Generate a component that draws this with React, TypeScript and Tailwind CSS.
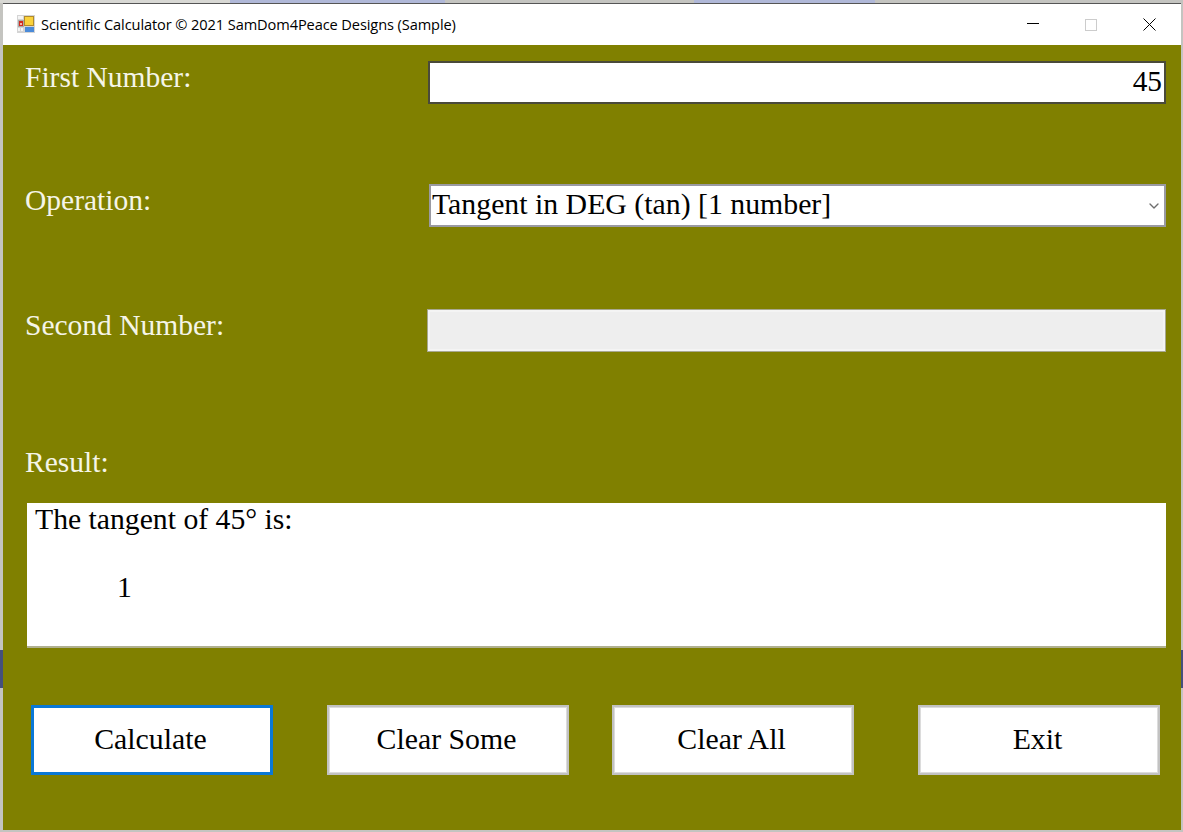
import { ChevronDown } from "lucide-react";

const serif = "font-['Liberation_Serif',serif]";

const AppIcon = () => (
  <svg width="18" height="18" viewBox="0 0 18 18" className="shrink-0">
    <rect width="18" height="18" fill="#d4d4d4" />
    <rect x="1" y="1" width="5" height="3" fill="#f4f4f4" />
    <rect x="1" y="5" width="6" height="7" fill="#a9a9a9" />
    <rect x="2" y="6" width="4" height="5" fill="#d22b20" />
    <rect x="3" y="8" width="2" height="2" fill="#f3b8a8" />
    <rect x="7" y="1" width="10" height="10" fill="#b08a2c" />
    <rect x="8" y="2" width="8" height="8" fill="#fad23c" />
    <rect x="8" y="12" width="9" height="5" fill="#4a8ad8" />
    <rect x="1" y="13" width="2" height="3" fill="#f4f4f4" />
    <rect x="4" y="13" width="2" height="3" fill="#f4f4f4" />
  </svg>
);

const TitleBar = () => (
  <div className="h-[42px] bg-white border-t border-[#555555] flex items-center justify-between">
    <div className="flex items-center gap-[6px] pl-[14px] font-['Open_Sans','Noto_Sans',sans-serif] text-[14.6px] text-black tracking-[-0.1px]">
      <AppIcon />
      <span>Scientific Calculator © 2021 SamDom4Peace Designs (Sample)</span>
    </div>
    <div className="flex items-center pr-[3px]">
      <div className="w-[58px] flex justify-center">
        <div className="w-3 h-px bg-black -mt-[2px]" />
      </div>
      <div className="w-[58px] flex justify-center">
        <div className="w-3 h-3 border border-[#cccccc]" />
      </div>
      <div className="w-[58px] flex justify-center">
        <svg width="13" height="13" viewBox="0 0 13 13" stroke="black" strokeWidth="1" fill="none">
          <path d="M0.5 0.5 12.5 12.5M12.5 0.5 0.5 12.5" />
        </svg>
      </div>
    </div>
  </div>
);

const Label = ({ children, className }: { children: string; className: string }) => (
  <label className={`block text-[29.5px] leading-[34px] text-[#f5f5e8] ${className}`}>{children}</label>
);

const Btn = ({ label, focused, className }: { label: string; focused?: boolean; className?: string }) => (
  <button
    className={`w-[242px] h-[70px] bg-white text-black text-[29.8px] leading-none pr-[3px] pb-[2px] ${
      focused ? "border-[3px] border-[#0a78d6]" : "border-2 border-[#c2c2c2] shadow-[inset_0_0_0_1px_#dcdcdc]"
    } ${className ?? ""}`}
  >
    {label}
  </button>
);

export default function App() {
  return (
    <div className={`relative w-[1183px] h-[832px] bg-[#c4c4c0] overflow-hidden ${serif}`}>
      {/* bits of the desktop showing behind the window */}
      <div className="flex h-[3px]">
        <div className="w-[230px] bg-[#d8d8d4]" />
        <div className="w-[215px] bg-[#b0b8d8]" />
        <div className="w-[249px] bg-[#c4c4c0]" />
        <div className="w-[181px] bg-[#b0b8d8]" />
        <div className="flex-1 bg-[#c4c4c0]" />
      </div>
      <div className="absolute left-0 top-[650px] w-[3px] h-[38px] bg-[#45507c]" />
      <div className="absolute right-0 top-[650px] w-[2px] h-[38px] bg-[#45507c]" />

      <div className="w-[1178px] ml-[3px]">
        <TitleBar />
        <div className="h-[785px] bg-[#808000] pl-[22px] pr-[15px]">
          <div className="flex justify-between pt-[16px]">
            <Label className="-mt-[1px]">First Number:</Label>
            <input
              readOnly
              value="45"
              className="w-[738px] h-[43px] bg-white border-2 border-[#4a4a3a] text-right text-[29.33px] text-black pr-[2px] pb-[2px] outline-none"
            />
          </div>

          <div className="flex justify-between mt-[80px]">
            <Label className="-mt-[1px]">Operation:</Label>
            <div className="w-[737px] h-[43px] flex items-center justify-between bg-white border-2 border-[#9a9aa2] text-[29.8px] leading-[35px] text-black pl-[1px] pr-[2px] pb-[4px]">
              <span>Tangent in DEG (tan) [1 number]</span>
              <ChevronDown className="w-[16px] h-[16px] mt-[4px] text-[#6e6e6e]" strokeWidth={2} />
            </div>
          </div>

          <div className="flex justify-between mt-[82px]">
            <Label className="-mt-[1px]">Second Number:</Label>
            <input
              disabled
              className="w-[739px] h-[43px] bg-[#eeeeee] border border-[#a8a890] shadow-[inset_0_0_0_2px_#f4f4f4]"
            />
          </div>

          <Label className="mt-[93px]">Result:</Label>

          <div className="mt-[24px] ml-[2px] w-[1139px] h-[145px] bg-white border-b-2 border-[#b0b090] pl-[8px] text-[29.7px] leading-[32px] text-black">
            <div>The tangent of 45° is:</div>
            <div className="mt-[36px] pl-[82px]">1</div>
          </div>

          <div className="flex mt-[57px] ml-[6px]">
            <Btn label="Calculate" focused />
            <Btn label="Clear Some" className="ml-[54px]" />
            <Btn label="Clear All" className="ml-[43px]" />
            <Btn label="Exit" className="ml-[64px]" />
          </div>
        </div>
      </div>
    </div>
  );
}
